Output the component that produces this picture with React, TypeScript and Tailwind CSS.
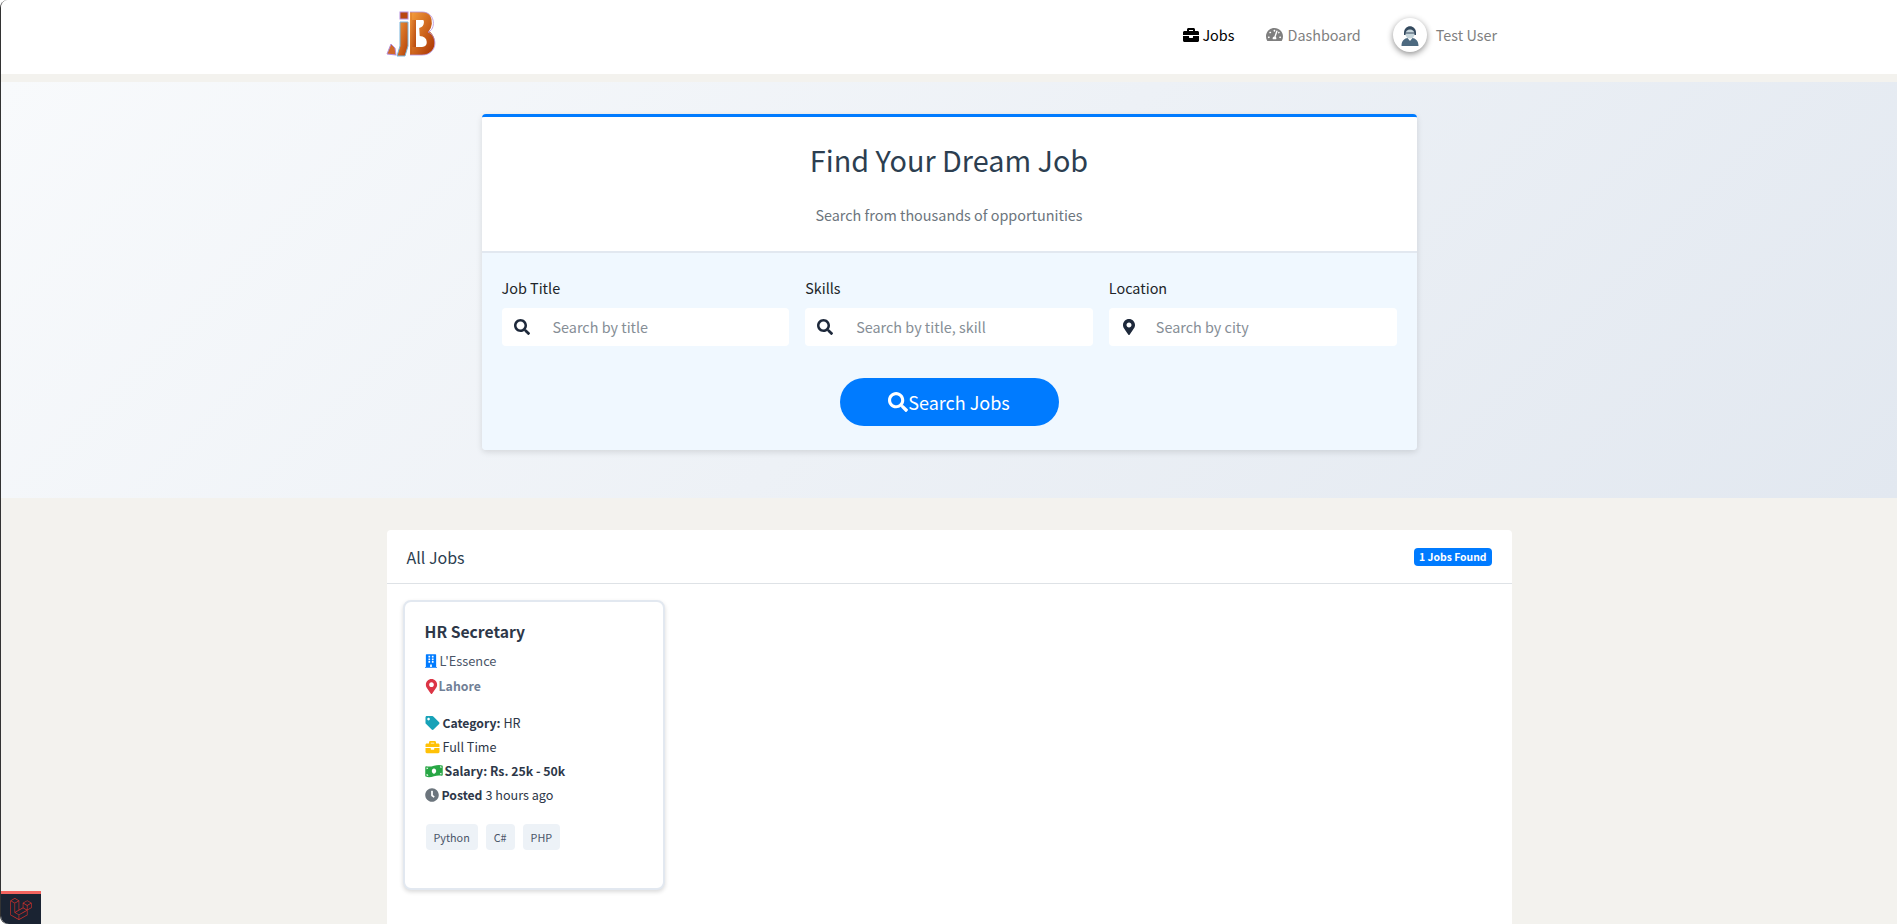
import { FaBriefcase, FaBuilding, FaClock, FaLaravel, FaMapMarkerAlt, FaMoneyBillWave, FaSearch, FaTag, FaTachometerAlt } from 'react-icons/fa'

function Logo() {
  return (
    <svg width="50" height="50" viewBox="0 0 50 50" fill="none">
      <defs>
        <linearGradient id="jb" x1="0" y1="0" x2="1" y2="1">
          <stop offset="0" stopColor="#f0963a" />
          <stop offset="1" stopColor="#b23f08" />
        </linearGradient>
      </defs>
      <polygon points="5,34 9,38 10,45 1,44" fill="#d0672a" stroke="#b48fdc" strokeWidth="1" />
      <rect x="14" y="2" width="8" height="7" fill="#b8470f" stroke="#b48fdc" strokeWidth="1" />
      <polygon points="14,12 22,12 22,36 19,46 11,46 14,36" fill="url(#jb)" stroke="#78b4dc" strokeWidth="1" />
      <rect x="24" y="2" width="6" height="43" fill="url(#jb)" />
      <path d="M26 6 H37 C44 6 44 20 34 22 C48 23 48 41 36 41 H26" stroke="url(#jb)" strokeWidth="8" />
      <path d="M24 2 H36 C50 2 50 20 42 22 C52 26 52 45 36 45 H24" stroke="#b48fdc" strokeWidth="0.8" />
    </svg>
  )
}

function Avatar() {
  return (
    <svg width="24" height="24" viewBox="0 0 24 24">
      <path d="M6 10 C6 1 18 1 18 10 L18 12 L6 12 Z" fill="#34495e" />
      <circle cx="12" cy="11" r="4.6" fill="#c7d6dc" />
      <path d="M3.5 23 C3.5 17 7 15.5 9.5 15 L12 18 L14.5 15 C17 15.5 20.5 17 20.5 23 Z" fill="#4d6a80" />
      <path d="M7 10 H17" stroke="#34495e" strokeWidth="1" />
    </svg>
  )
}

function SearchField({ label, placeholder, pin }: { label: string; placeholder: string; pin?: boolean }) {
  return (
    <div className="flex-1">
      <label className="block text-[14.4px] leading-[24px] text-[#212529] mb-[8px]">{label}</label>
      <div className="flex h-[38px] items-center rounded-[4px] bg-white pl-[12px]">
        {pin ? (
          <FaMapMarkerAlt className="w-[16px] h-[16px] text-[#1e293b]" />
        ) : (
          <FaSearch className="w-[16px] h-[16px] text-[#1e293b]" />
        )}
        <span className={pin ? 'ml-[19px] text-[14.4px] text-[#868e96]' : 'ml-[23px] text-[14.4px] text-[#868e96]'}>{placeholder}</span>
      </div>
    </div>
  )
}

export default function App() {
  return (
    <div className="h-[924px] overflow-hidden border-l border-[#333] bg-[#f3f2ee] rounded-tl-[8px] rounded-bl-[8px] font-['Noto_Sans_CJK_SC',sans-serif]">
      <nav className="h-[74px] bg-white">
        <div className="mx-auto flex h-full w-[1140px] items-center justify-between pb-[5px] pl-[7px] pr-[22px]">
          <Logo />
          <div className="flex items-center text-[14.4px] leading-[24px]">
            <span className="flex items-center gap-[3px] text-black">
              <FaBriefcase className="w-[16px] h-[16px]" /> Jobs
            </span>
            <span className="ml-[32px] flex items-center gap-[4px] text-[#7f7f7f]">
              <FaTachometerAlt className="w-[17px] h-[17px]" /> Dashboard
            </span>
            <span className="ml-[32px] flex h-[34px] w-[34px] items-center justify-center rounded-full bg-white shadow-[0_2px_6px_rgba(0,0,0,0.45)]">
              <Avatar />
            </span>
            <span className="ml-[9px] text-[#7f7f7f]">Test User</span>
          </div>
        </div>
      </nav>

      <section className="mt-[8px] h-[416px] bg-[linear-gradient(135deg,#f8fafc,#e2e8f0)] pt-[32px]">
        <div className="mx-auto w-[935px] overflow-hidden rounded-[4px] border-t-[3px] border-[#007bff] shadow-[0_2px_6px_rgba(0,0,0,0.12)]">
          <div className="h-[136px] border-b-2 border-[#e2e8f0] bg-white pt-[23px] text-center">
            <h1 className="text-[28.8px] leading-[40px] text-[#2c3e50]">Find Your Dream Job</h1>
            <p className="mt-[23px] text-[14.4px] leading-[24px] text-[#6c757d]">Search from thousands of opportunities</p>
          </div>
          <div className="h-[197px] bg-[#f0f8ff] px-[20px] pt-[23px]">
            <div className="flex gap-[16px]">
              <SearchField label="Job Title" placeholder="Search by title" />
              <SearchField label="Skills" placeholder="Search by title, skill" />
              <SearchField label="Location" placeholder="Search by city" pin />
            </div>
            <div className="mt-[32px] flex justify-center">
              <button className="flex h-[48px] w-[219px] items-center justify-center rounded-full bg-[#007bff] text-[18px] leading-[28px] text-white">
                <FaSearch className="w-[20px] h-[20px]" />
                Search Jobs
              </button>
            </div>
          </div>
        </div>
      </section>

      <main className="mx-auto mt-[32px] h-[500px] w-[1125px] rounded-t-[4px] bg-white">
        <div className="flex h-[54px] items-center justify-between border-b border-[#dee2e6] pl-[20px] pr-[20px]">
          <span className="text-[16px] leading-[24px] text-[#2c3e50]">All Jobs</span>
          <span className="rounded-[4px] bg-[#007bff] px-[5px] text-[10.4px] leading-[18px] font-bold text-white">1 Jobs Found</span>
        </div>
        <div className="p-[16px]">
          <article className="h-[290px] w-[262px] rounded-[8px] border-2 border-[#e2e8f0] bg-white pl-[20px] pt-[17px] shadow-[0_2px_4px_rgba(0,0,0,0.15)]">
            <h3 className="text-[15.7px] leading-[26px] font-bold text-[#2d3748]">HR Secretary</h3>
            <p className="mt-[6px] flex items-center gap-[3px] text-[12.8px] leading-[20px] text-[#4a5568]">
              <FaBuilding className="w-[12px] h-[14px] text-[#007bff]" /> L'Essence
            </p>
            <p className="mt-[5px] flex items-center gap-[1px] text-[12.3px] leading-[20px] font-bold text-[#718096]">
              <FaMapMarkerAlt className="w-[13px] h-[15px] text-[#dc3545]" /> Lahore
            </p>
            <div className="mt-[17px] space-y-[4px] text-[12.6px] leading-[20px] text-[#2d3748]">
              <p className="flex items-center gap-[3px]">
                <FaTag className="w-[15px] h-[14px] text-[#17a2b8]" /> <b className="text-[12.2px]">Category:</b> HR
              </p>
              <p className="flex items-center gap-[3px]">
                <FaBriefcase className="w-[15px] h-[14px] text-[#ffc107]" /> Full Time
              </p>
              <p className="flex items-center gap-[2px] text-[12.3px] font-bold">
                <FaMoneyBillWave className="w-[18px] h-[14px] text-[#28a745]" /> Salary: Rs. 25k - 50k
              </p>
              <p className="flex items-center gap-[3px]">
                <FaClock className="w-[14px] h-[14px] text-[#6c757d]" /> <b className="text-[12.2px]">Posted</b> 3 hours ago
              </p>
            </div>
            <div className="mt-[19px] flex gap-[8px] pl-[1px] text-[10.8px] leading-[26px] text-[#4a5568]">
              <span className="rounded-[4px] bg-[#edf2f7] px-[8px]">Python</span>
              <span className="rounded-[4px] bg-[#edf2f7] px-[8px]">C#</span>
              <span className="rounded-[4px] bg-[#edf2f7] px-[8px]">PHP</span>
            </div>
          </article>
        </div>
      </main>

      <div className="fixed bottom-0 left-[1px] flex h-[33px] w-[40px] items-center justify-center rounded-bl-[8px] border-t-[3px] border-[#f4645f] bg-[#1a2332]">
        <FaLaravel className="w-[22px] h-[22px] text-[#c9302c]" />
      </div>
    </div>
  )
}
